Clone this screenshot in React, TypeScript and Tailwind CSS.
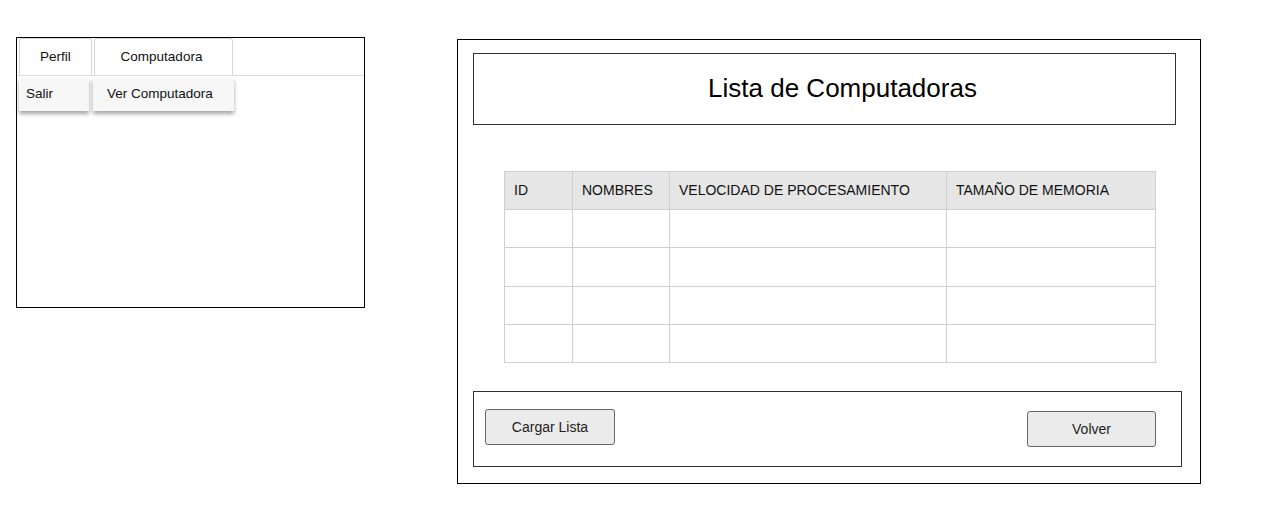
import React from "react";

const font = { fontFamily: '"Liberation Sans", Arial, sans-serif' };

function LeftPanel() {
  return (
    <div className="ml-[16px] mt-[37px] w-[349px] h-[271px] border border-black bg-white shrink-0">
      <div className="relative">
        <div className="flex items-end pl-[2px] pt-[1px] h-[38px] border-b border-[#dcdcdc]">
          <div className="w-[73px] h-[37px] border border-[#d6d6d6] border-b-0 rounded-t-[3px] flex items-center justify-center text-[13.5px] text-[#111]">
            Perfil
          </div>
          <div className="ml-[2px] w-[139px] h-[37px] border border-[#d6d6d6] border-b-0 rounded-t-[3px] flex items-center justify-center pr-[4px] text-[13.5px] text-[#111]">
            Computadora
          </div>
        </div>
        <div className="flex pl-[2px] mt-[2px]">
          <div className="w-[70px] h-[33px] bg-[#f7f7f7] shadow-[0_3px_4px_rgba(0,0,0,0.35)] flex items-center pl-[7px] text-[13.5px] text-[#111]">
            Salir
          </div>
          <div className="ml-[4px] w-[141px] h-[33px] bg-[#f7f7f7] shadow-[0_3px_4px_rgba(0,0,0,0.35)] flex items-center pl-[14px] text-[13.5px] text-[#111]">
            Ver Computadora
          </div>
        </div>
      </div>
    </div>
  );
}

const headers = ["ID", "NOMBRES", "VELOCIDAD DE PROCESAMIENTO", "TAMAÑO DE MEMORIA"];
const widths = ["w-[68px]", "w-[97px]", "w-[277px]", "w-[209px]"];

function RightPanel() {
  return (
    <div className="ml-[92px] mt-[39px] w-[744px] h-[445px] border border-black bg-white shrink-0 pl-[15px] pt-[13px]">
      <div className="w-[703px] h-[72px] border border-[#333] flex items-center justify-center pl-[36px] pb-[1px] text-[26px] text-black">
        Lista de Computadoras
      </div>
      <div className="ml-[31px] mt-[46px]">
        <table className="table-fixed border-collapse w-[652px]">
          <thead>
            <tr className="h-[38px] bg-[#e6e6e6]">
              {headers.map((h, i) => (
                <th
                  key={h}
                  className={`${widths[i]} border border-[#cfcfcf] text-left font-normal text-[14px] text-[#111] pl-[9px]`}
                >
                  {h}
                </th>
              ))}
            </tr>
          </thead>
          <tbody>
            {[0, 1, 2, 3].map((r) => (
              <tr key={r} className={r === 1 ? "h-[39px]" : "h-[38px]"}>
                {headers.map((h) => (
                  <td key={h} className="border border-[#cfcfcf]"></td>
                ))}
              </tr>
            ))}
          </tbody>
        </table>
      </div>
      <div className="mt-[28px] w-[709px] h-[76px] border border-[#333] flex items-start justify-between pl-[11px] pr-[25px] pt-[17px]">
        <button className="w-[130px] h-[36px] bg-[#ebebeb] border border-[#666] rounded-[3px] text-[14px] text-[#222]">
          Cargar Lista
        </button>
        <button className="mt-[2px] w-[129px] h-[36px] bg-[#ebebeb] border border-[#666] rounded-[3px] text-[14px] text-[#222]">
          Volver
        </button>
      </div>
    </div>
  );
}

export default function App() {
  return (
    <div style={font} className="w-[1279px] h-[520px] bg-white flex items-start">
      <LeftPanel />
      <RightPanel />
    </div>
  );
}
